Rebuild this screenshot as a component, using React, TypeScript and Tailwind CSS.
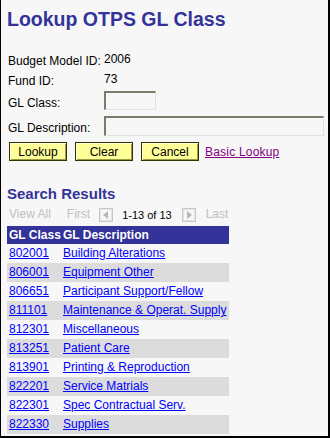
import React from "react";

const rows = [
  ["802001", "Building Alterations"],
  ["806001", "Equipment Other"],
  ["806651", "Participant Support/Fellow"],
  ["811101", "Maintenance & Operat. Supply"],
  ["812301", "Miscellaneous"],
  ["813251", "Patient Care"],
  ["813901", "Printing & Reproduction"],
  ["822201", "Service Matrials"],
  ["822301", "Spec Contractual Serv."],
  ["822330", "Supplies"],
];

const Arrow = ({ dir }: { dir: "left" | "right" }) => (
  <svg width="14" height="14" viewBox="0 0 14 14" className="mt-[1px]">
    <rect x="0.5" y="0.5" width="13" height="13" fill="#f7f7f7" stroke="#c8c8c8" />
    <rect x="1.5" y="1.5" width="11" height="11" fill="none" stroke="#e4e4e4" />
    {dir === "left" ? (
      <polygon points="9,3 9,11 4,7" fill="#b8b8b8" />
    ) : (
      <polygon points="5,3 5,11 10,7" fill="#b8b8b8" />
    )}
  </svg>
);

const Btn = ({ label }: { label: string }) => (
  <button className="w-[58px] h-[19px] bg-[#ffff99] border border-[#333300] shadow-[inset_1px_1px_0_#ffffd8,inset_-1px_-1px_0_#9a9a44] text-[12px] leading-[14px] text-black">
    {label}
  </button>
);

export default function App() {
  return (
    <div className="w-[330px] h-[438px] bg-[#f7f7f7] border-l border-r-2 border-b-2 border-black pl-[6px] font-['Liberation_Sans',Arial,sans-serif] overflow-hidden">
      <h1 className="mt-[7px] text-[19.5px] leading-[24px] font-bold text-[#333399]">
        Lookup OTPS GL Class
      </h1>

      <div className="ml-[1px] mt-[21px] text-[12px] leading-[14px] text-black">
        <div className="flex h-[20px]">
          <span className="w-[96px] pt-[2px]">Budget Model ID:</span>
          <span>2006</span>
        </div>
        <div className="flex h-[19px]">
          <span className="w-[96px] pt-[2px]">Fund ID:</span>
          <span>73</span>
        </div>
        <div className="flex h-[19px]">
          <span className="w-[96px] pt-[5px]">GL Class:</span>
          <div className="w-[52px] h-[19px] border-2 border-t-[#7b7b6b] border-l-[#7b7b6b] border-b-[#e2e2d8] border-r-[#e2e2d8] border-b border-r bg-[#f7f7f7]" />
        </div>
        <div className="flex h-[20px] mt-[6px]">
          <span className="w-[96px] pt-[5px]">GL Description:</span>
          <div className="w-[220px] h-[20px] border-2 border-t-[#7b7b6b] border-l-[#7b7b6b] border-b-[#e2e2d8] border-r-[#e2e2d8] border-b border-r bg-[#f7f7f7]" />
        </div>
        <div className="flex items-center h-[19px] mt-[6px] ml-[1px]">
          <div className="flex gap-[8px]">
            <Btn label="Lookup" />
            <Btn label="Clear" />
            <Btn label="Cancel" />
          </div>
          <a href="#" className="ml-[6px] text-[#800080] underline tracking-[0.2px]">
            Basic Lookup
          </a>
        </div>
      </div>

      <h2 className="mt-[24px] text-[15px] leading-[18px] font-bold text-[#333399]">
        Search Results
      </h2>

      <div className="mt-[4px] h-[19px] flex items-start text-[12px] leading-[14px] text-[#c0c0c0] ml-[2px]">
        <span>View All</span>
        <span className="ml-[16px]">First</span>
        <span className="ml-[9px]">
          <Arrow dir="left" />
        </span>
        <span className="ml-[9px] text-[11px] leading-[14px] pt-[1px] text-black">1-13 of 13</span>
        <span className="ml-[10px]">
          <Arrow dir="right" />
        </span>
        <span className="ml-[10px]">Last</span>
      </div>

      <div className="w-[222px] text-[12px]">
        <div className="flex h-[18px] leading-[18px] bg-[#333399] text-white font-bold">
          <span className="w-[54px] pl-[2px]">GL Class</span>
          <span className="pl-[2px]">GL Description</span>
        </div>
        {rows.map(([code, desc], i) => (
          <div
            key={code}
            className={`flex h-[19px] leading-[19px] ${i % 2 === 1 ? "bg-[#dcdcdc]" : ""}`}
          >
            <span className="w-[54px] pl-[2px]">
              <a href="#" className="text-[#0000ff] underline">
                {code}
              </a>
            </span>
            <span className="pl-[2px] whitespace-nowrap">
              <a href="#" className="text-[#0000ff] underline">
                {desc}
              </a>
            </span>
          </div>
        ))}
      </div>
    </div>
  );
}
